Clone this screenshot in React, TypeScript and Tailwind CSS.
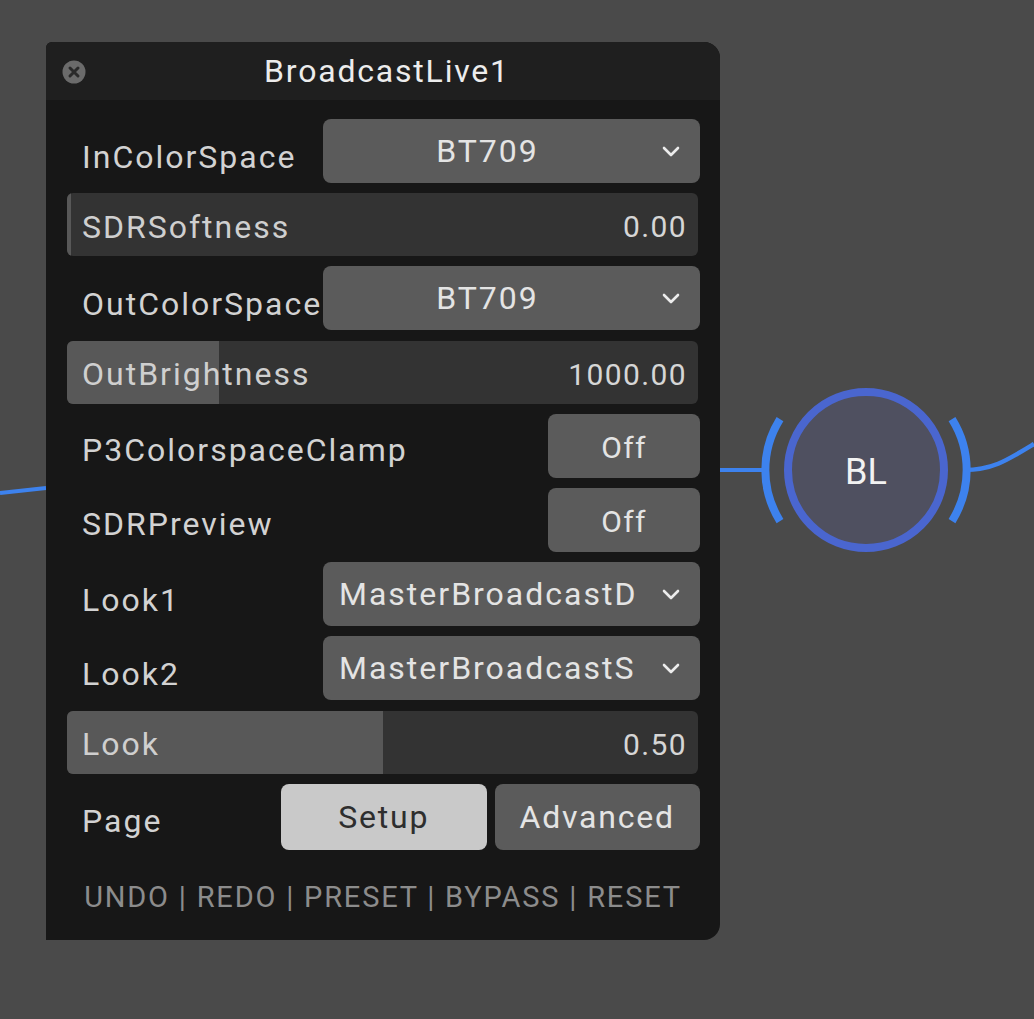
import React from "react";

const font = { fontFamily: "Roboto, 'Liberation Sans', sans-serif" };

function Chevron() {
  return (
    <svg width="18" height="11" viewBox="0 0 18 11" className="shrink-0">
      <path d="M2 2 L9 9 L16 2" fill="none" stroke="#ececec" strokeWidth="2.6" strokeLinecap="round" strokeLinejoin="round" />
    </svg>
  );
}

function DropdownRow({ label, value, left }: { label: string; value: string; left?: boolean }) {
  return (
    <div className="flex h-16 items-center">
      <div className="w-[257px] pl-4 pt-3 text-[32px] tracking-[2px] text-[#d2d2d2]">{label}</div>
      <div className="flex h-16 flex-1 items-center rounded-lg bg-[#5b5b5b] pl-4 pr-5 text-[32px] tracking-[2px] text-[#e4e4e4]">
        <span className={left ? "flex-1 whitespace-nowrap overflow-hidden" : "flex-1 text-center pr-[26px]"}>{value}</span>
        <Chevron />
      </div>
    </div>
  );
}

function SliderRow({ label, value, fill }: { label: string; value: string; fill: number }) {
  return (
    <div className="relative mx-px mr-[2px] flex h-[63px] items-center overflow-hidden rounded-md bg-[#333333]">
      <div className="absolute inset-y-0 left-0 bg-[#585858]" style={{ width: fill }} />
      <span className="relative flex-1 pl-[15px] pt-1 text-[32px] tracking-[2px] text-[#cfcfcf]">{label}</span>
      <span className="relative pr-[11px] pt-1 text-[30px] tracking-[1.4px] text-[#d6d6d6]">{value}</span>
    </div>
  );
}

function ToggleRow({ label, value }: { label: string; value: string }) {
  return (
    <div className="flex h-16 items-center">
      <div className="flex-1 pl-4 pt-2 text-[32px] tracking-[2px] text-[#d2d2d2]">{label}</div>
      <div className="flex h-16 w-[152px] items-center justify-center rounded-lg bg-[#5b5b5b] pt-1 text-[30px] tracking-[1.4px] text-[#e4e4e4]">
        {value}
      </div>
    </div>
  );
}

function Node() {
  return (
    <svg className="absolute inset-0" width="1034" height="1019" viewBox="0 0 1034 1019">
      <path d="M0 493 L46 488" stroke="#3d82ee" strokeWidth="4" fill="none" />
      <path d="M720 470 L768 470" stroke="#3d82ee" strokeWidth="4" fill="none" />
      <path d="M964 470 C992 470 1006 461 1034 444" stroke="#3d82ee" strokeWidth="4.5" fill="none" />
      <path d="M780 419 A96 96 0 0 0 780 521" stroke="#3d82ee" strokeWidth="8" fill="none" />
      <path d="M952 419 A96 96 0 0 1 952 521" stroke="#3d82ee" strokeWidth="8" fill="none" />
      <circle cx="866" cy="470" r="78" fill="#4f5060" stroke="#4a66cf" strokeWidth="8" />
      <text x="866" y="484" textAnchor="middle" fill="#f2f2f2" fontSize="36" style={font}>BL</text>
    </svg>
  );
}

export default function App() {
  return (
    <div className="relative h-[1019px] w-[1034px] overflow-hidden bg-[#4a4a4a]" style={font}>
      <Node />
      <div className="absolute left-[46px] top-[42px] flex h-[898px] w-[674px] flex-col overflow-hidden rounded-tl-md rounded-tr-2xl rounded-br-2xl bg-[#171717]">
        <div className="relative flex h-[58px] items-center justify-center bg-[#1f1f1f]">
          <svg className="absolute left-4 top-[18px]" width="24" height="24" viewBox="0 0 24 24">
            <circle cx="12" cy="12" r="11.5" fill="#6b6b6b" />
            <path d="M8 8 L16 16 M16 8 L8 16" stroke="#2a2a2a" strokeWidth="3" strokeLinecap="round" />
          </svg>
          <span className="pl-2 text-[32px] tracking-[1.8px] text-[#ececec]">BroadcastLive1</span>
        </div>
        <div className="flex flex-col gap-[10.2px] px-5 pt-[19px]">
          <DropdownRow label="InColorSpace" value="BT709" />
          <SliderRow label="SDRSoftness" value="0.00" fill={4} />
          <DropdownRow label="OutColorSpace" value="BT709" />
          <SliderRow label="OutBrightness" value="1000.00" fill={152} />
          <ToggleRow label="P3ColorspaceClamp" value="Off" />
          <ToggleRow label="SDRPreview" value="Off" />
          <DropdownRow label="Look1" value="MasterBroadcastD" left />
          <DropdownRow label="Look2" value="MasterBroadcastS" left />
          <SliderRow label="Look" value="0.50" fill={316} />
          <div className="flex h-[66px] items-center">
            <div className="w-[215px] pl-4 pt-2 text-[32px] tracking-[2px] text-[#d2d2d2]">Page</div>
            <div className="flex flex-1 gap-2">
              <div className="flex h-[66px] flex-1 items-center justify-center rounded-lg bg-[#c9c9c9] text-[32px] tracking-[1.8px] text-[#2e2e2e]">
                Setup
              </div>
              <div className="flex h-[66px] flex-1 items-center justify-center rounded-lg bg-[#5b5b5b] text-[32px] tracking-[1.8px] text-[#e4e4e4]">
                Advanced
              </div>
            </div>
          </div>
        </div>
        <div className="mt-[26px] text-center text-[29px] tracking-[1.8px] text-[#8c8c8c]">
          UNDO | REDO | PRESET | BYPASS | RESET
        </div>
      </div>
    </div>
  );
}
